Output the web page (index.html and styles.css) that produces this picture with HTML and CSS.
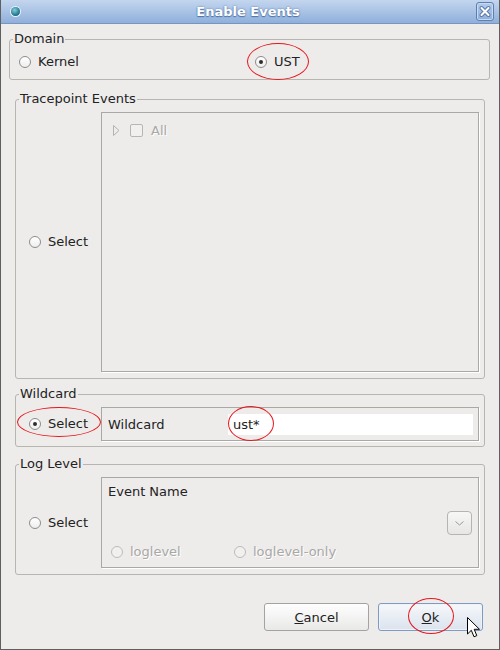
FILE: index.html
```html
<!DOCTYPE html>
<html>
<head>
<meta charset="utf-8">
<link rel="stylesheet" href="styles.css">
</head>
<body>
<div class="window">
  <div class="titlebar">
    <span class="title-icon"></span>
    <span class="title">Enable Events</span>
    <span class="close">
      <svg width="18" height="19" viewBox="0 0 18 19"><path d="M5.5 6 L12.5 13 M12.5 6 L5.5 13" stroke="#5a7bab" stroke-width="4" stroke-linecap="round"/><path d="M5.5 6 L12.5 13 M12.5 6 L5.5 13" stroke="#fff" stroke-width="2" stroke-linecap="round"/></svg>
    </span>
  </div>
  <div class="content">
    <fieldset class="group domain">
      <legend>Domain</legend>
      <div class="domain-row">
        <label class="radio"><span class="rb"></span>Kernel</label>
        <label class="radio"><span class="rb checked"></span>UST</label>
      </div>
    </fieldset>

    <fieldset class="group sub tracepoint">
      <legend>Tracepoint Events</legend>
      <div class="split">
        <div class="side"><label class="radio"><span class="rb"></span>Select</label></div>
        <div class="panel tree">
          <div class="tree-row">
            <svg class="expander" width="7" height="11" viewBox="0 0 7 11"><path d="M0.5 0.5 L6 5.5 L0.5 10.5 Z" fill="none" stroke="#b4b3b0" stroke-width="1"/></svg>
            <span class="cb"></span>
            <span class="disabled">All</span>
          </div>
        </div>
      </div>
    </fieldset>

    <fieldset class="group sub wildcard">
      <legend>Wildcard</legend>
      <div class="split">
        <div class="side"><label class="radio"><span class="rb checked"></span>Select</label></div>
        <div class="panel wild-panel">
          <span class="wild-label">Wildcard</span>
          <span class="field">ust*</span>
        </div>
      </div>
    </fieldset>

    <fieldset class="group sub loglevel">
      <legend>Log Level</legend>
      <div class="split">
        <div class="side"><label class="radio"><span class="rb"></span>Select</label></div>
        <div class="panel log-panel">
          <div class="event-name">Event Name</div>
          <div class="combo-row">
            <span class="combo-btn">
              <svg width="9" height="5" viewBox="0 0 9 5"><path d="M0.5 0.5 L4.5 4 L8.5 0.5" fill="none" stroke="#9a9a9a" stroke-width="1"/></svg>
            </span>
          </div>
          <div class="level-row">
            <label class="radio off"><span class="rb"></span><span class="disabled">loglevel</span></label>
            <label class="radio off"><span class="rb"></span><span class="disabled">loglevel-only</span></label>
          </div>
        </div>
      </div>
    </fieldset>

    <div class="buttons">
      <button class="btn"><u>C</u>ancel</button>
      <button class="btn default"><u>O</u>k</button>
    </div>
  </div>

  <span class="mark mark-ust"></span>
  <span class="mark mark-select"></span>
  <span class="mark mark-field"></span>
  <span class="mark mark-ok"></span>

  <svg class="cursor" width="14" height="22" viewBox="0 0 14 22">
    <path d="M0.5 0.5 L0.5 17 L4.3 13.3 L7 19.8 L9.8 18.6 L7.2 12.3 L12.5 12.3 Z" fill="#fff" stroke="#000" stroke-width="1" stroke-linejoin="round"/>
  </svg>
</div>
</body>
</html>
```

FILE: styles.css
```css
* { box-sizing: border-box; }
html, body { margin: 0; padding: 0; }
body {
  width: 500px;
  height: 650px;
  background: #edeceb;
  font-family: "DejaVu Sans", sans-serif;
  font-size: 13px;
  color: #222;
  overflow: hidden;
}
.window {
  position: relative;
  width: 500px;
  height: 650px;
  background: #edeceb;
  border: 1px solid #5f5f5f;
  border-top: 0;
}
.titlebar {
  height: 24px;
  display: flex;
  align-items: center;
  padding: 0 5px 0 10px;
  background: linear-gradient(#c4d6ef, #8fafdb);
  border-bottom: 1px solid #7894bf;
}
.title-icon {
  width: 9px;
  height: 9px;
  border-radius: 50%;
  background: radial-gradient(circle at 40% 35%, #7fd0dd, #1d6e86 70%);
  box-shadow: 0 0 0 1px #e9f1fa;
  flex: none;
}
.title {
  flex: 1;
  text-align: center;
  font-weight: bold;
  font-size: 13px;
  color: #fff;
  text-shadow: 0 0 2px #4f73a6, 0 1px 1px #4f73a6;
  line-height: 18px;
  padding-top: 1px;
}
.close {
  width: 18px;
  height: 19px;
  border: 1px solid #5d7eae;
  border-radius: 3px;
  background: linear-gradient(#b4cbea, #8eaedb);
  box-shadow: inset 0 0 0 1px #c8daf1;
  display: flex;
  align-items: center;
  justify-content: center;
  flex: none;
}
.close svg { display: block; margin: -1px; }
.content {
  padding: 6px 9px 0 8px;
}
.group {
  margin: 0;
  padding: 0;
  border: 1px solid #b7b5b0;
  border-radius: 3px;
  min-width: 0;
}
.group legend {
  padding: 0 1px;
  margin-left: 3px;
  line-height: 18px;
  font-size: 13px;
  color: #222;
}
.domain-row {
  display: grid;
  grid-template-columns: 236px 1fr;
  padding: 5px 0 8px 9px;
}
.radio {
  display: flex;
  align-items: center;
  gap: 7px;
  height: 18px;
  line-height: 18px;
  white-space: nowrap;
}
.rb {
  position: relative;
  flex: none;
  width: 12px;
  height: 12px;
  border-radius: 50%;
  border: 1px solid #8e8d8a;
  background: linear-gradient(#ffffff, #eeeeee);
}
.rb.checked::after {
  content: "";
  position: absolute;
  left: 3px;
  top: 3px;
  width: 4px;
  height: 4px;
  border-radius: 50%;
  background: #2e2e2e;
}
.radio.off .rb {
  border-color: #bdbcb9;
  background: #f1f0ef;
}
.sub { margin: 10px 5px 0 6px; }
.wildcard { margin-top: 6px; }
.loglevel { margin-top: 8px; }
.split {
  display: flex;
  align-items: center;
  padding: 4px 5px 6px 0;
}
.wildcard .split { padding-bottom: 5px; }
.side {
  width: 85px;
  flex: none;
  padding-left: 13px;
}
.panel {
  flex: 1;
  border: 1px solid #a9a8a4;
  box-shadow: 1px 1px 0 #fff;
}
.tree { height: 260px; }
.tree-row {
  display: flex;
  align-items: center;
  height: 18px;
  margin-top: 8px;
  padding-left: 11px;
}
.expander { display: block; flex: none; }
.cb {
  width: 13px;
  height: 13px;
  margin-left: 10px;
  margin-right: 8px;
  border: 1px solid #b7b6b3;
  border-radius: 2px;
  background: #f1f0ef;
  flex: none;
}
.disabled {
  color: #a9a8a5;
  text-shadow: 1px 1px 0 #fff;
}
.wild-panel {
  height: 34px;
  display: flex;
  align-items: center;
  padding: 0 5px 0 6px;
}
.wild-label { width: 120px; flex: none; }
.field {
  flex: 1;
  height: 21px;
  line-height: 21px;
  background: #fff;
  padding-left: 5px;
}
.log-panel {
  padding: 5px 6px 6px 6px;
}
.event-name { line-height: 18px; }
.combo-row {
  display: flex;
  justify-content: flex-end;
  margin-top: 10px;
}
.combo-btn {
  width: 25px;
  height: 24px;
  border: 1px solid #b5b4b1;
  border-radius: 4px;
  background: linear-gradient(#f7f7f6, #e7e6e4);
  display: flex;
  align-items: center;
  justify-content: center;
}
.combo-btn svg { display: block; }
.level-row {
  display: grid;
  grid-template-columns: 123px auto;
  margin-top: 8px;
  padding-left: 3px;
}
.buttons {
  display: flex;
  justify-content: flex-end;
  gap: 9px;
  margin: 28px 7px 0 0;
}
.btn {
  width: 105px;
  height: 28px;
  padding: 0;
  border: 1px solid #a4a3a0;
  border-radius: 3px;
  background: linear-gradient(#fefefe, #e9e9e8);
  font-family: "DejaVu Sans", sans-serif;
  font-size: 13px;
  color: #222;
}
.btn.default {
  border-color: #7f9bc4;
  background: linear-gradient(#f6f8fb, #dbe3ee);
  box-shadow: inset 0 0 0 1px #eef3f9;
}
.mark {
  position: absolute;
  border: 1px solid #e8161a;
  border-radius: 50%;
}
.mark-ust { left: 246px; top: 43px; width: 62px; height: 37px; }
.mark-select { left: 16px; top: 407px; width: 84px; height: 30px; }
.mark-field { left: 227px; top: 406px; width: 46px; height: 35px; }
.mark-ok { left: 407px; top: 598px; width: 46px; height: 36px; }
.cursor {
  position: absolute;
  left: 466px;
  top: 617px;
  display: block;
}
```
